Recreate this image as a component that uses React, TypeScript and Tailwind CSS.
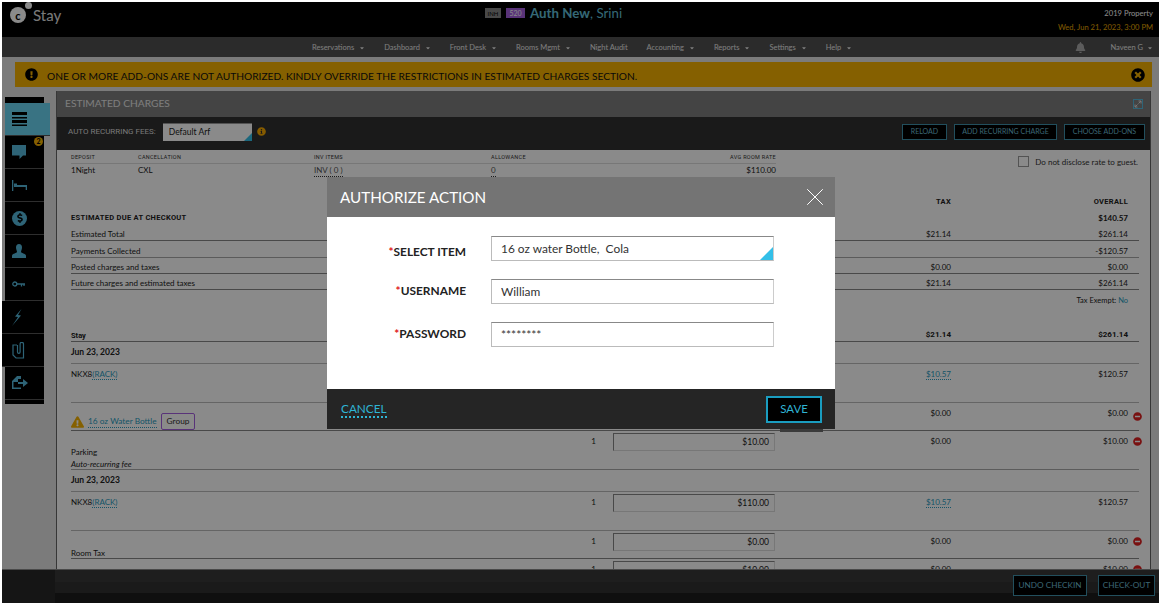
import { FaBell, FaCaretDown, FaDollarSign, FaExclamationCircle, FaExclamationTriangle, FaInfoCircle, FaMinusCircle, FaTimesCircle } from 'react-icons/fa';
import { X } from 'lucide-react';
import type { ReactNode } from 'react';

const navItems = [
    { label: 'Reservations', caret: true },
    { label: 'Dashboard', caret: true },
    { label: 'Front Desk', caret: true },
    { label: 'Rooms Mgmt', caret: true },
    { label: 'Night Audit', caret: false },
    { label: 'Accounting', caret: true },
    { label: 'Reports', caret: true },
    { label: 'Settings', caret: true },
    { label: 'Help', caret: true },
];

function Bars() {
    return (
        <svg width="15" height="14" viewBox="0 0 15 14" fill="#000">
            <rect x="0" y="0" width="15" height="3" />
            <rect x="0" y="5" width="15" height="1.5" />
            <rect x="0" y="8" width="15" height="3" />
            <rect x="0" y="12.500" width="15" height="1.500" />
        </svg>
    );
}

function CommentIcon() {
    return (
        <svg width="14" height="14" viewBox="0 0 14 14" fill="#55b9dc">
            <path d="M0 0h14v10.500h-3L7.500 14V10.500H0z" />
        </svg>
    );
}

function BedIcon() {
    return (
        <svg width="15" height="11" viewBox="0 0 15 11" fill="#55b9dc">
            <rect x="0" y="0" width="1.300" height="11" />
            <rect x="2" y="3.500" width="3" height="3" />
            <rect x="2" y="5" width="13" height="2" />
            <rect x="13.700" y="5" width="1.300" height="5" />
        </svg>
    );
}

function UserIcon() {
    return (
        <svg width="14" height="14" viewBox="0 0 14 14" fill="#55b9dc">
            <path d="M4 3.500a3 3.500 0 0 1 6 0c0 2-1 3-1 4.500 0 1 4.500 1.500 5 3.500V14H0v-2.500C.5 9.500 5 9 5 8c0-1.500-1-2.500-1-4.500z" />
        </svg>
    );
}

function KeyIcon() {
    return (
        <svg width="13" height="7" viewBox="0 0 13 7" fill="none" stroke="#55b9dc" strokeWidth="1.300">
            <circle cx="2.800" cy="3" r="2" />
            <path d="M5 3h8M9.500 3v2.500M12 3v2" />
        </svg>
    );
}

function BoltIcon() {
    return (
        <svg width="11" height="17" viewBox="0 0 11 17" fill="#55b9dc">
            <path d="M9.500 0 3 7.500l3 .5L0 17l9-10.500L6 6z" />
        </svg>
    );
}

function ClipDoc() {
    return (
        <svg width="13" height="17" viewBox="0 0 13 17" fill="none" stroke="#55b9dc" strokeWidth="1.200">
            <path d="M5 3H1v10l3 3h7.500V9" />
            <path d="M5.500 3V10a1.300 1.300 0 0 0 2.600 0V2a1.500 1.500 0 0 1 3.400 0v7" />
        </svg>
    );
}

function MoveDoc() {
    return (
        <svg width="16" height="14" viewBox="0 0 16 14" fill="#55b9dc">
            <path d="M0 13V5l5-5h4v3H6v3H1.500v5.500H9V13z" />
            <path d="M6 6h5V3l5 4-5 4V8H6z" />
        </svg>
    );
}

function SideItem({ children, active, wide, badge }: { children: ReactNode; active?: boolean; wide?: boolean; badge?: string }) {
    return (
        <div
            className={`relative flex h-[33px] items-center border-b border-[#555] ${active ? 'mr-[-6px] bg-[#6ad4f2]' : 'bg-black'} ${wide ? 'ml-[-3px] pl-[10px]' : 'pl-[7px]'}`}
        >
            {children}
            {badge && (
                <span className="absolute right-[1px] top-[1px] flex h-[9px] w-[9px] items-center justify-center rounded-full bg-[#f6b200] text-[7px] font-bold text-black">
                    {badge}
                </span>
            )}
        </div>
    );
}

function Sidebar() {
    return (
        <div className="mt-[6px] ml-[3px] h-[307px] w-[39px] shrink-0 bg-black pt-[6px]">
            <SideItem active><Bars /></SideItem>
            <SideItem badge="2"><CommentIcon /></SideItem>
            <SideItem><BedIcon /></SideItem>
            <SideItem>
                <span className="flex h-[15px] w-[15px] items-center justify-center rounded-full bg-[#55b9dc]">
                    <FaDollarSign className="h-[10px] w-[10px] text-black" />
                </span>
            </SideItem>
            <SideItem><UserIcon /></SideItem>
            <SideItem><KeyIcon /></SideItem>
            <SideItem wide><BoltIcon /></SideItem>
            <SideItem wide><ClipDoc /></SideItem>
            <SideItem><MoveDoc /></SideItem>
        </div>
    );
}

function ToolButton({ children, className }: { children: ReactNode; className: string }) {
    return (
        <button className={`flex items-center justify-center border border-[#3f93ad] bg-black text-[#6fbdd4] ${className}`}>
            {children}
        </button>
    );
}

function Link({ children }: { children: ReactNode }) {
    return <span className="border-b border-dotted border-[#2a9cc0] text-[#2a9cc0]">{children}</span>;
}

type RowProps = {
    label?: ReactNode;
    qty?: string;
    amount?: string;
    tax?: ReactNode;
    overall?: ReactNode;
    remove?: boolean;
    height: string;
    line?: string;
    align?: string;
    bold?: boolean;
};

function Row({ label, qty, amount, tax, overall, remove, height, line = 'border-[#bbb]', align = 'items-center', bold }: RowProps) {
    // cells beside an amount box line up with the middle of the box
    const cell = amount ? 'leading-[17px]' : '';
    return (
        <div className={`flex ${height} ${align} border-b ${line} text-[8px] text-[#222] ${bold ? 'font-bold' : ''}`}>
            <div className="w-[515px] shrink-0">{label}</div>
            <div className={`w-[15px] shrink-0 text-center ${cell}`}>{qty}</div>
            <div className="ml-[12px] w-[162px] shrink-0">
                {amount && (
                    <div className="flex h-[18px] items-center justify-end border border-b-[#ddd] border-l-[#888] border-r-[#ddd] border-t-[#888] pr-[5px] text-[8.500px]">
                        {amount}
                    </div>
                )}
            </div>
            <div className={`w-[176px] shrink-0 text-right ${cell}`}>{tax}</div>
            <div className={`relative w-[177px] shrink-0 text-right ${cell}`}>
                {overall}
                {remove && <FaMinusCircle className={`absolute right-[-14px] h-[9px] w-[9px] text-[#e02020] ${amount ? 'top-[4px]' : 'top-[1px]'}`} />}
            </div>
        </div>
    );
}

const din = "font-['Roboto',sans-serif] text-[7.500px] tracking-[0.3px]";

function Charges() {
    return (
        <div className="min-h-0 flex-1 overflow-hidden bg-white">
            <div className="flex h-[44px] pl-[14px] pr-[12px] pt-[5px]">
                <div className="w-[705px] shrink-0 text-[#222]">
                    <div className="grid grid-cols-[67px_176px_177px_1fr_60px] border-b border-[#ddd] pb-[2px] font-['Roboto',sans-serif] text-[5.500px] uppercase leading-none tracking-[0.3px] text-[#333]">
                        <span>Deposit</span>
                        <span>Cancellation</span>
                        <span>Inv Items</span>
                        <span>Allowance</span>
                        <span className="whitespace-nowrap text-right">Avg Room Rate</span>
                    </div>
                    <div className="grid grid-cols-[67px_176px_177px_1fr_60px] text-[8px]">
                        <span>1Night</span>
                        <span>CXL</span>
                        <span className="w-fit border-b border-dotted border-[#333] text-[#555]">INV ( 0 )</span>
                        <span className="w-fit border-b border-dotted border-[#333] text-[#555]">0</span>
                        <span className="text-right">$110.00</span>
                    </div>
                </div>
                <label className="ml-auto flex h-[13px] items-center gap-[6px] text-[8px] text-[#333]">
                    <span className="h-[11px] w-[11px] border border-[#999] bg-white" />
                    Do not disclose rate to guest.
                </label>
            </div>
            <div className="ml-[14px] w-[1068px]">
                <Row height="h-[16px]" line="border-transparent" bold tax={<span className={din}>TAX</span>} overall={<span className={din}>OVERALL</span>} />
                <Row height="h-[16px]" line="border-transparent" bold label={<span className={din}>ESTIMATED DUE AT CHECKOUT</span>} overall="$140.57" />
                <Row height="h-[15px]" line="border-[#888]" align="items-end" label="Estimated Total" tax="$21.14" overall="$261.14" />
                <Row height="h-[17px]" line="border-[#a8a8a8]" align="items-end" label="Payments Collected" overall="-$120.57" />
                <Row height="h-[16px]" line="border-[#888]" align="items-end" label="Posted charges and taxes" tax="$0.00" overall="$0.00" />
                <Row height="h-[16px]" line="border-[#888]" align="items-end" label="Future charges and estimated taxes" tax="$21.14" overall="$261.14" />
                <Row height="h-[17px]" line="border-transparent" align="items-end" overall={<span className="text-[7.500px]">Tax Exempt: <span className="text-[#2a9cc0]">No</span></span>} />
                <div className="h-[20px]" />
                <Row height="h-[15px]" line="border-[#888]" align="items-end" bold label={<span className="font-['Roboto',sans-serif] text-[7.500px]">Stay</span>} tax={<span className="font-['Roboto',sans-serif]">$21.14</span>} overall={<span className="font-['Roboto',sans-serif]">$261.14</span>} />
                <Row height="h-[22px]" bold label={<span className="text-[8.500px]">Jun 23, 2023</span>} />
                <Row height="h-[39px]" align="items-start pt-[4px]" label={<>NKX8<Link>(RACK)</Link></>} tax={<Link>$10.57</Link>} overall="$120.57" />
                <Row
                    height="h-[28px]"
                    line="border-[#888]"
                    label={
                        <span className="flex items-center pt-[10px] text-[8.300px]">
                            <FaExclamationTriangle className="mr-[4px] h-[12px] w-[13px] text-[#f6b200]" />
                            <Link>16 oz Water Bottle</Link>
                            <span className="ml-[4px] rounded-[2px] border border-[#a45ee0] px-[5px] py-px text-[#333]">Group</span>
                        </span>
                    }
                    tax={<span className="relative top-[-4px]">$0.00</span>}
                    overall={<span className="relative top-[-4px]">$0.00</span>}
                    remove
                />
                <Row
                    height="h-[39px]"
                    line="border-[#aaa]"
                    align="items-start pt-[2px]"
                    label={
                        <div className="pt-[13px] leading-[12px]">
                            <div>Parking</div>
                            <div className="italic">Auto-recurring fee</div>
                        </div>
                    }
                    qty="1"
                    amount="$10.00"
                    tax="$0.00"
                    overall="$10.00"
                    remove
                />
                <Row height="h-[22px]" bold label={<span className="text-[8.500px]">Jun 23, 2023</span>} />
                <Row height="h-[39px]" align="items-start pt-[2px]" label={<span className="relative top-[2px]">NKX8<Link>(RACK)</Link></span>} qty="1" amount="$110.00" tax={<Link>$10.57</Link>} overall="$120.57" />
                <Row height="h-[28px]" line="border-[#888]" align="items-start pt-[2px]" label={<div className="pt-[14px]">Room Tax</div>} qty="1" amount="$0.00" tax="$0.00" overall="$0.00" remove />
                <Row height="h-[30px]" align="items-start pt-[2px]" qty="1" amount="$10.00" tax="$0.00" overall="$10.00" remove />
            </div>
        </div>
    );
}

function AuthField({ label, labelClass, children }: { label: string; labelClass?: string; children: ReactNode }) {
    return (
        <div className="flex items-center">
            <label className={`w-[139px] text-right text-[11.900px] font-bold text-[#222] ${labelClass ?? ''}`}>
                <span className="text-[#e02020]">*</span>
                {label}
            </label>
            <div className="ml-[25px] w-[283px]">{children}</div>
        </div>
    );
}

function AuthorizeModal() {
    const inputClass = 'h-[25px] w-full border border-b-[#bbb] border-l-[#bbb] border-r-[#ccc] border-t-[#888] bg-white pl-[9px] text-[11.900px] text-[#333] outline-none';
    return (
        <div className="fixed bottom-0 left-[2px] right-0 top-[2px] z-10 bg-black/[.46]">
            <div className="absolute left-[325px] top-[175px] w-[508px]">
                <div className="flex h-[40px] items-center justify-between bg-[#747474] pl-[13px] pr-[5px]">
                    <h2 className="text-[15.200px] text-white">AUTHORIZE ACTION</h2>
                    <X className="h-[30px] w-[30px] text-white" strokeWidth={0.8} />
                </div>
                <div className="flex h-[172px] flex-col gap-[17px] bg-white pt-[19px]">
                    <AuthField label="SELECT ITEM" labelClass="pt-[6px]">
                        <div className={`relative flex items-center ${inputClass}`}>
                            <span className="whitespace-pre">16 oz water Bottle,  Cola</span>
                            <span className="absolute bottom-0 right-0 h-0 w-0 border-b-[13px] border-l-[13px] border-b-[#33bfe8] border-l-transparent" />
                        </div>
                    </AuthField>
                    <AuthField label="USERNAME">
                        <input className={inputClass} value="William" readOnly />
                    </AuthField>
                    <AuthField label="PASSWORD">
                        <input className={inputClass} value="********" readOnly />
                    </AuthField>
                </div>
                <div className="flex h-[40px] items-center justify-between bg-[#252525] pl-[14px] pr-[13px]">
                    <a className="border-b-2 border-dotted border-[#2fb4d4] text-[11.800px] leading-[15px] text-[#2fb4d4]">CANCEL</a>
                    <button className="h-[27px] w-[56px] border-2 border-[#1a9dc0] bg-black text-[11.500px] text-[#2fb4d4]">SAVE</button>
                </div>
                <div className="absolute bottom-[-3px] right-[12px] h-[3px] w-[43px] bg-[#3a3a3a]" />
            </div>
        </div>
    );
}

export default function App() {
    return (
        <div className="flex h-[603px] flex-col overflow-hidden bg-white pl-[2px] pt-[2px] font-['Lato',sans-serif]">
            {/* Top bar */}
            <header className="relative flex h-[35px] shrink-0 items-start justify-between bg-black">
                <div className="flex items-start pl-[8px] pt-[3px]">
                    <div className="relative mt-[2px] flex h-[16px] w-[16px] items-center justify-center rounded-full bg-[#fff]">
                        <span className="text-[11px] font-bold leading-none text-black">c</span>
                        <span className="absolute right-[-6px] top-[-5px] h-[7px] w-[7px] rounded-full bg-[#fff]" />
                    </div>
                    <span className="ml-[7px] text-[15px] leading-[20px] text-[#e0e0e0]">Stay</span>
                </div>
                <div className="absolute left-[483px] top-[3px] flex items-center">
                    <span className="flex h-[10px] w-[16px] items-center justify-center bg-[#888] text-[6px] text-black">INH</span>
                    <span className="ml-[5px] flex h-[10px] w-[19px] items-center justify-center bg-[#a45ee0] text-[7px] text-white">520</span>
                    <span className="ml-[5px] text-[13.300px] leading-[16px] text-[#63c0db]"><b>Auth New</b>, Srini</span>
                </div>
                <div className="pr-[6px] pt-[4px] text-right text-[7.600px] leading-[14px]">
                    <div className="text-white">2019 Property</div>
                    <div className="text-[#e8aa00]">Wed, Jun 21, 2023, 3:00 PM</div>
                </div>
            </header>

            {/* Main nav */}
            <nav className="flex h-[20px] shrink-0 items-center bg-[#505050] pl-[310px] pr-[6px] pt-[1px] text-[7.500px] text-[#e8e8e8]">
                <div className="flex gap-[19px]">
                    {navItems.map(item => (
                        <span key={item.label} className="flex items-center gap-[5px]">
                            {item.label}
                            {item.caret && <FaCaretDown className="h-[6px] w-[6px]" />}
                        </span>
                    ))}
                </div>
                <FaBell className="ml-auto h-[11px] w-[11px] text-[#aaa]" />
                <span className="ml-[24px] flex items-center gap-[4px]">
                    Naveen G
                    <FaCaretDown className="h-[6px] w-[6px]" />
                </span>
            </nav>

            <div className="flex min-h-0 flex-1 flex-col bg-[#e4e4e4]">
                {/* Alert */}
                <div className="ml-[13px] mr-[7px] mt-[5px] flex h-[25px] shrink-0 items-center bg-[#f6b200] pl-[10px] pr-[7px] text-[#111]">
                    <FaExclamationCircle className="h-[13px] w-[13px] text-black" />
                    <span className="ml-[9px] pt-[3px] text-[10.200px] leading-none">ONE OR MORE ADD-ONS ARE NOT AUTHORIZED. KINDLY OVERRIDE THE RESTRICTIONS IN ESTIMATED CHARGES SECTION.</span>
                    <FaTimesCircle className="ml-auto h-[14px] w-[14px] text-black" />
                </div>

                <div className="mt-[4px] flex min-h-0 flex-1">
                    <Sidebar />

                    {/* Estimated charges panel */}
                    <section className="ml-[12px] mr-[8px] flex min-w-0 flex-1 flex-col border-x border-[#666]">
                        <div className="flex h-[26px] shrink-0 items-center justify-between bg-[#7e7e7e] pl-[8px] pr-[7px]">
                            <h2 className="text-[10.200px] text-[#e8e8e8]">ESTIMATED CHARGES</h2>
                            <svg width="10" height="10" viewBox="0 0 10 10" fill="none" stroke="#ddd" strokeWidth="1">
                                <rect x="0.500" y="0.500" width="9" height="9" stroke="#55b9dc" />
                                <path d="M2 8l2.500-2.500M8 2 5.500 4.500M5.500 2H8v2.500M2 5.500V8h2.500" />
                            </svg>
                        </div>
                        <div className="flex h-[33px] shrink-0 items-center bg-[#303030] pb-[4px] pl-[11px] pr-[5px]">
                            <span className="font-['Roboto',sans-serif] text-[8px] text-[#ddd]">AUTO RECURRING FEES:</span>
                            <div className="relative ml-[7px] flex h-[18px] w-[89px] items-center border-t border-[#999] bg-white pl-[6px] text-[8.500px] text-[#222]">
                                Default Arf
                                <span className="absolute bottom-0 right-0 h-0 w-0 border-b-[8px] border-l-[8px] border-b-[#33bfe8] border-l-transparent" />
                            </div>
                            <FaInfoCircle className="ml-[5px] h-[9px] w-[9px] text-[#f6a800]" />
                            <div className="ml-auto flex gap-[7px] text-[7px]">
                                <ToolButton className="h-[16px] w-[45px]">RELOAD</ToolButton>
                                <ToolButton className="h-[16px] w-[103px]">ADD RECURRING CHARGE</ToolButton>
                                <ToolButton className="h-[16px] w-[81px]">CHOOSE ADD-ONS</ToolButton>
                            </div>
                        </div>
                        <Charges />
                    </section>
                </div>

                {/* Footer actions */}
                <footer className="flex h-[34px] shrink-0 items-start gap-[11px] border-t border-[#888] bg-[linear-gradient(#383838_0,#383838_12px,#303030_12px,#303030_23px,#1c1c1c_23px)] pr-[4px] text-[8.200px]">
                    <div className="mr-auto h-full w-[53px] bg-[#272727]" />
                    <ToolButton className="mt-[5px] h-[21px] w-[74px] bg-[#111]">UNDO CHECKIN</ToolButton>
                    <ToolButton className="mt-[5px] h-[21px] w-[57px] bg-[#111]">CHECK-OUT</ToolButton>
                </footer>
            </div>

            <AuthorizeModal />
        </div>
    );
}
